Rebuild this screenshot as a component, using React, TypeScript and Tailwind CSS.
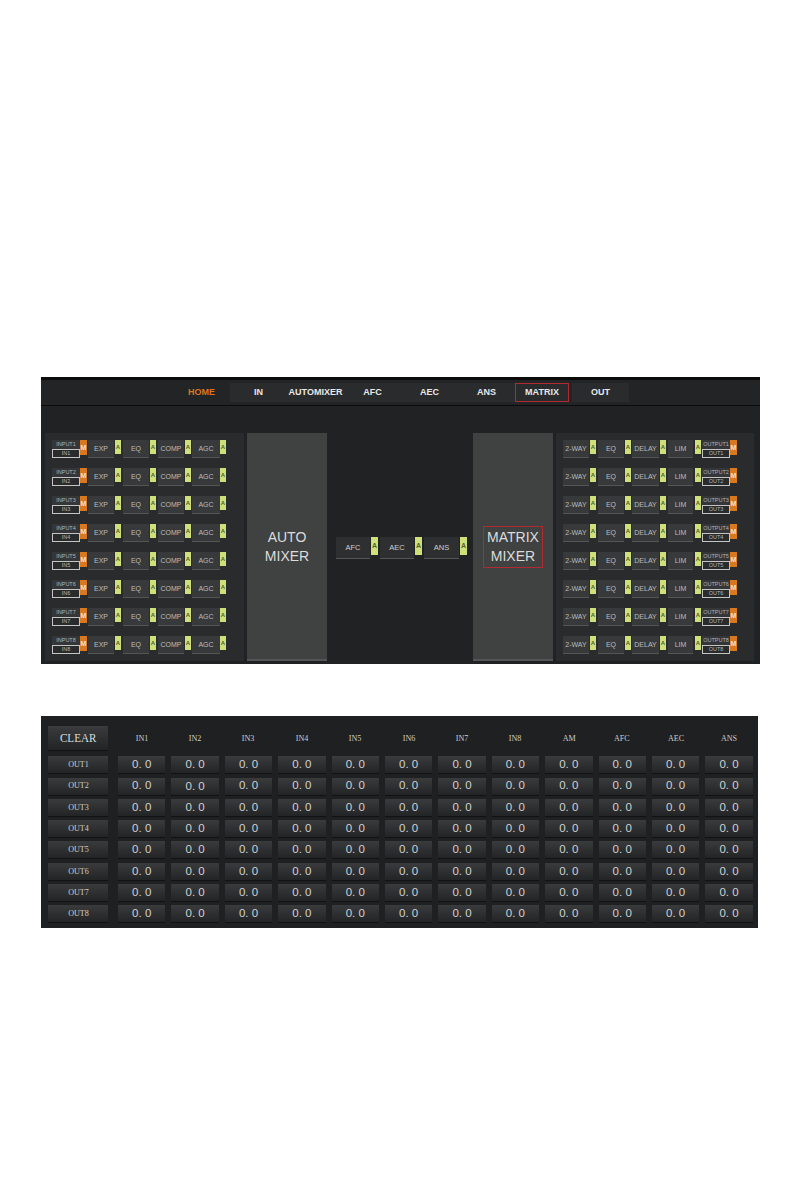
const tabs = ["IN", "AUTOMIXER", "AFC", "AEC", "ANS"]
const inputs = [1, 2, 3, 4, 5, 6, 7, 8]
const sources = ["IN1", "IN2", "IN3", "IN4", "IN5", "IN6", "IN7", "IN8", "AM", "AFC", "AEC", "ANS"]

function Flag({ className = "" }: { className?: string }) {
  return (
    <div className={`flex h-[14px] w-[6px] shrink-0 items-center justify-center self-start bg-[#cfe07a] text-[6px] font-bold leading-none text-[#55602a] ${className}`}>
      A
    </div>
  )
}

function Mute() {
  return (
    <div className="flex h-[15px] w-[7px] shrink-0 items-center justify-center self-start bg-[#d9791f] text-[7px] font-bold leading-none text-[#f3e2c8]">
      M
    </div>
  )
}

function Block({ label, width }: { label: string; width: string }) {
  return (
    <div className={`flex h-[18px] shrink-0 items-center justify-center border-b border-b-[#555] bg-[#38393a] text-[7px] leading-none text-[#bcbcbc] ${width}`}>
      {label}
    </div>
  )
}

function ChannelLabel({ top, bottom }: { top: string; bottom: string }) {
  return (
    <div className="flex w-[28px] shrink-0 flex-col items-stretch text-center leading-none">
      <div className="h-[9px] bg-[#353637] text-[5.5px] leading-[9px] text-[#b4b4b4]">{top}</div>
      <div className="h-[9px] border border-[#c4c4c4] text-[5.5px] leading-[7px] text-[#b5b5b5]">{bottom}</div>
    </div>
  )
}

function InputRow({ n }: { n: number }) {
  return (
    <div className="flex h-[28px] items-start">
      <ChannelLabel top={`INPUT${n}`} bottom={`IN${n}`} />
      <Mute />
      <div className="ml-px flex items-start">
        <Block label="EXP" width="w-[26px]" />
        <Flag className="ml-px" />
        <Block label="EQ" width="ml-[2px] w-[26px]" />
        <Flag className="ml-px" />
        <Block label="COMP" width="ml-[2px] w-[26px]" />
        <Flag className="ml-px" />
        <Block label="AGC" width="ml-[1px] w-[28px]" />
        <Flag />
      </div>
    </div>
  )
}

function OutputRow({ n }: { n: number }) {
  return (
    <div className="flex h-[28px] items-start">
      <Block label="2-WAY" width="w-[26px]" />
      <Flag className="ml-px" />
      <Block label="EQ" width="ml-[2px] w-[26px]" />
      <Flag className="ml-px" />
      <Block label="DELAY" width="ml-px w-[27px]" />
      <Flag className="ml-px" />
      <Block label="LIM" width="ml-[2px] w-[25px]" />
      <Flag className="ml-[2px]" />
      <div className="ml-px flex items-start">
        <ChannelLabel top={`OUTPUT${n}`} bottom={`OUT${n}`} />
        <Mute />
      </div>
    </div>
  )
}

function Mixer({ children }: { children: React.ReactNode }) {
  return (
    <div className="flex h-[228px] w-[80px] shrink-0 flex-col items-center justify-center border-b-2 border-b-[#555] bg-[#404141] pt-[2px] text-center text-[14px] leading-[19px] text-[#dcdcdc]">
      {children}
    </div>
  )
}

function Module({ label, width }: { label: string; width: string }) {
  return (
    <>
      <div className={`flex h-[22px] shrink-0 items-center justify-center border-b border-b-[#555] bg-[#2e2f30] text-[7.5px] text-[#cfcfcf] ${width}`}>
        {label}
      </div>
      <div className="flex h-[18px] w-[7px] shrink-0 items-center justify-center self-start bg-[#cfe07a] text-[7px] font-bold text-[#55602a]">A</div>
    </>
  )
}

function KeyButton({ children, className = "" }: { children: React.ReactNode; className?: string }) {
  return (
    <div className={`flex items-center justify-center border-b border-b-[#121212] bg-gradient-to-b from-[#3a3b3c] to-[#232425] ${className}`}>
      {children}
    </div>
  )
}

export default function App() {
  return (
    <div className="h-[1191px] w-[794px] bg-white pt-[377px] font-['Liberation_Sans',Arial,sans-serif] antialiased">
      <section className="ml-[41px] h-[287px] w-[719px] overflow-hidden bg-[#212224]">
        <div className="h-[3px] bg-[#0c0c0c]" />
        <nav className="flex h-[26px] items-stretch border-b border-b-[#0b0b0b] bg-[#232425] pl-[132px] text-[9px] font-bold">
          <div className="flex w-[57px] items-center justify-center text-[#d9761f]">HOME</div>
          {tabs.map((tab) => (
            <div key={tab} className="my-[3px] flex w-[57px] items-center justify-center whitespace-nowrap bg-[#2a2b2d] text-[#e8e8e8]">
              {tab}
            </div>
          ))}
          <div className="my-[3px] flex w-[54px] items-center justify-center border border-[#b02a30] bg-[#2a2b2d] text-[#e8e8e8]">MATRIX</div>
          <div className="my-[3px] ml-[3px] flex w-[57px] items-center justify-center bg-[#2a2b2d] text-[#e8e8e8]">OUT</div>
        </nav>
        <div className="flex pl-[4px] pt-[27px]">
          <div className="h-[228px] w-[199px] shrink-0 bg-[#2a2b2c] pl-[7px] pt-[7px]">
            {inputs.map((n) => (
              <InputRow key={n} n={n} />
            ))}
          </div>
          <div className="ml-[3px]">
            <Mixer>
              AUTO
              <br />
              MIXER
            </Mixer>
          </div>
          <div className="ml-[9px] flex w-[129px] shrink-0 gap-x-px pt-[104px]">
            <Module label="AFC" width="w-[34px]" />
            <div className="w-px" />
            <Module label="AEC" width="w-[34px]" />
            <div className="w-[2px]" />
            <Module label="ANS" width="w-[35px]" />
          </div>
          <div className="ml-[8px]">
            <Mixer>
              <div className="border border-[#b02a30] px-[3px] py-px">
                MATRIX
                <br />
                MIXER
              </div>
            </Mixer>
          </div>
          <div className="ml-[3px] h-[228px] w-[198px] shrink-0 bg-[#2a2b2c] pl-[7px] pt-[7px]">
            {inputs.map((n) => (
              <OutputRow key={n} n={n} />
            ))}
          </div>
        </div>
      </section>

      <section className="ml-[41px] mt-[52px] h-[212px] w-[717px] bg-[#1f2021] pl-[7px] pt-[10px]">
        <div className="grid grid-cols-[64px_repeat(12,47.4px)] gap-x-[6px] gap-y-[3.3px]">
          <KeyButton className="h-[25px] w-[60px] font-['Liberation_Serif',serif] text-[#dcdcdc]">
            <span className="scale-x-[0.82] text-[13.5px]">CLEAR</span>
          </KeyButton>
          {sources.map((source) => (
            <div key={source} className="flex h-[27px] items-center justify-center pb-[2px] font-['Liberation_Serif',serif] text-[#cdcdcd]">
              <span className="scale-x-[0.9] text-[9px]">{source}</span>
            </div>
          ))}
          {inputs.map((row) => (
            <div key={row} className="contents">
              <KeyButton className="h-[18px] w-[60px] font-['Liberation_Serif',serif] text-[#cdcdcd]">
                <span className="scale-x-[0.9] text-[9px]">{`OUT${row}`}</span>
              </KeyButton>
              {sources.map((source) => (
                <KeyButton
                  key={source}
                  className={`h-[18px] text-[11.5px] text-[#d2d2d2] ${row === 2 && source === "IN2" ? "pt-[2px]" : ""}`}
                >
                  0. 0
                </KeyButton>
              ))}
            </div>
          ))}
        </div>
      </section>
    </div>
  )
}
